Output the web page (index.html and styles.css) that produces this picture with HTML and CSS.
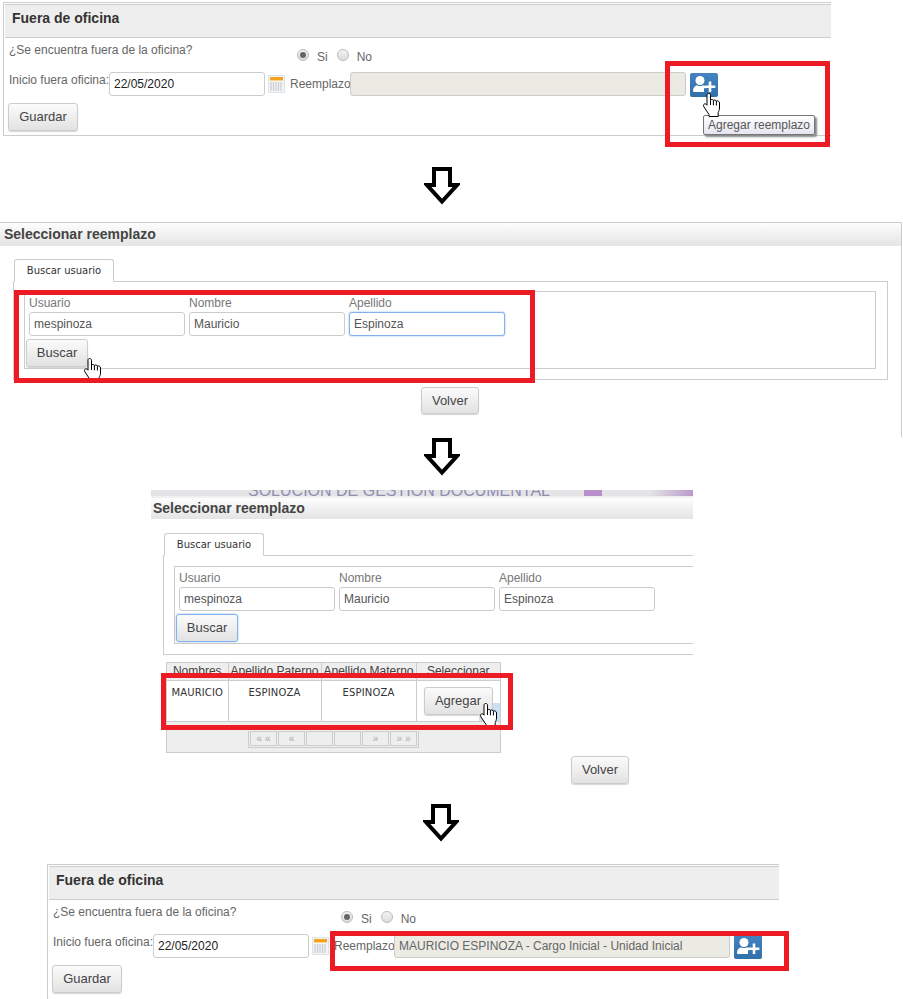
FILE: index.html
```html
<!DOCTYPE html>
<html lang="es">
<head>
<meta charset="utf-8">
<title>Fuera de oficina</title>
<link rel="stylesheet" href="styles.css">
</head>
<body>
<svg class="defs" width="0" height="0" aria-hidden="true">
  <symbol id="hand" viewBox="0 0 17 24">
    <path d="M4 2.200C4 1 4.800.5 5.700.5S7.500 1 7.500 2.200V7C8.200 6.200 9.800 6.300 10.400 7.300 11.200 6.700 12.800 6.900 13.400 8 14.400 7.600 16.500 8 16.500 10V15C16.500 17 15.800 18 15.200 19.500V23.500H6V21.500L1 14C.2 12.800.4 11.500 1.300 11 2.200 10.500 3.200 11 4 12.200Z" fill="#fff" stroke="#000" stroke-width="1" stroke-linejoin="round"/>
    <path d="M7.500 7v5M10.400 7.300v5M13.400 8v4.500" fill="none" stroke="#000" stroke-width="1"/>
  </symbol>
  <symbol id="user-plus" viewBox="0 0 28 24">
    <rect width="28" height="24" rx="2" fill="url(#blue)"/>
    <circle cx="10" cy="7.500" r="4.500" fill="#fff"/>
    <path d="M3 17.500C3 14.500 5 12.800 7 12.200 8.800 13.400 11.200 13.400 13 12.200 14 12.500 15 13 15.800 13.800V15.200H14V19H4.500C3.600 19 3 18.500 3 17.500Z" fill="#fff"/>
    <path d="M18.700 8.500h2.600v4h4v2.600h-4v4h-2.600v-4h-4v-2.600h4z" fill="#fff"/>
    <defs>
      <linearGradient id="blue" x1="0" y1="0" x2="0" y2="1">
        <stop offset="0" stop-color="#4384c1"/>
        <stop offset="1" stop-color="#3071a9"/>
      </linearGradient>
    </defs>
  </symbol>
  <symbol id="calendar" viewBox="0 0 17 18">
    <rect x=".5" y=".5" width="16" height="17" fill="#f4f4f4" stroke="#dde3e8"/>
    <rect x="2" y="2" width="13" height="3" fill="#f5a31f"/>
    <rect x="2" y="5" width="13" height="1" fill="#f9d48c"/>
    <path d="M3 7v9M5.500 7v9M8 7v9M10.500 7v9M13 7v9" stroke="#c6ccd2" stroke-width="1.200"/>
  </symbol>
  <symbol id="arrow" viewBox="0 0 36 38">
    <path d="M10 2h16v16h7L18 34.500 3 18h7z" fill="#fff" stroke="#000" stroke-width="4"/>
  </symbol>
</svg>

<main class="canvas">

  <section class="office office-first">
    <h2 class="office-title">Fuera de oficina</h2>
    <div class="office-body">
      <div class="office-row office-row-question">
        <span class="question">¿Se encuentra fuera de la oficina?</span>
        <div class="radios">
          <input class="radio" type="radio" name="out1" checked><span class="radio-label">Si</span>
          <input class="radio" type="radio" name="out1"><span class="radio-label">No</span>
        </div>
      </div>
      <div class="office-row office-row-fields">
        <span class="start-label">Inicio fuera oficina:</span>
        <input class="field field-date" type="text" value="22/05/2020">
        <svg class="calendar"><use href="#calendar"/></svg>
        <span class="replace-label">Reemplazo</span>
        <input class="field field-replace" type="text" value="" disabled>
        <svg class="user-plus"><use href="#user-plus"/></svg>
      </div>
      <button class="btn btn-save" type="button">Guardar</button>
    </div>
  </section>

  <svg class="hand hand-add"><use href="#hand"/></svg>
  <div class="tooltip">Agregar reemplazo</div>
  <div class="mark mark-add"></div>
  <svg class="arrow arrow-1"><use href="#arrow"/></svg>

  <section class="picker picker-second">
    <h2 class="picker-title">Seleccionar reemplazo</h2>
    <div class="tab">Buscar usuario</div>
    <div class="tab-panel">
      <div class="search-box">
        <div class="search-fields">
          <label class="search-field"><span class="search-label">Usuario</span><input class="field" type="text" value="mespinoza"></label>
          <label class="search-field"><span class="search-label">Nombre</span><input class="field" type="text" value="Mauricio"></label>
          <label class="search-field"><span class="search-label">Apellido</span><input class="field field-focus" type="text" value="Espinoza"></label>
        </div>
        <button class="btn btn-search" type="button">Buscar</button>
      </div>
    </div>
    <div class="back-row"><button class="btn btn-back" type="button">Volver</button></div>
  </section>

  <svg class="hand hand-search"><use href="#hand"/></svg>
  <div class="mark mark-search"></div>
  <svg class="arrow arrow-2"><use href="#arrow"/></svg>

  <section class="picker picker-third">
    <div class="logo-strip"><span class="logo-text">SOLUCION DE GESTION DOCUMENTAL</span><i class="logo-block"></i><i class="logo-fade"></i></div>
    <h2 class="picker-title">Seleccionar reemplazo</h2>
    <div class="tab">Buscar usuario</div>
    <div class="tab-panel">
      <div class="search-box">
        <div class="search-fields">
          <label class="search-field"><span class="search-label">Usuario</span><input class="field" type="text" value="mespinoza"></label>
          <label class="search-field"><span class="search-label">Nombre</span><input class="field" type="text" value="Mauricio"></label>
          <label class="search-field"><span class="search-label">Apellido</span><input class="field" type="text" value="Espinoza"></label>
        </div>
        <button class="btn btn-search btn-focus" type="button">Buscar</button>
      </div>
    </div>
    <div class="results">
      <table class="results-table">
        <thead>
          <tr><th class="col-1">Nombres</th><th class="col-2">Apellido Paterno</th><th class="col-3">Apellido Materno</th><th class="col-4">Seleccionar</th></tr>
        </thead>
        <tbody>
          <tr>
            <td>MAURICIO</td><td>ESPINOZA</td><td>ESPINOZA</td>
            <td class="cell-action"><button class="btn btn-add" type="button">Agregar</button><i class="cell-highlight"></i></td>
          </tr>
        </tbody>
      </table>
      <div class="pager">
        <div class="pager-group">
          <span class="page">« «</span><span class="page">«</span><span class="page"></span><span class="page"></span><span class="page">»</span><span class="page">» »</span>
        </div>
      </div>
    </div>
    <div class="back-row"><button class="btn btn-back" type="button">Volver</button></div>
  </section>

  <svg class="hand hand-agregar"><use href="#hand"/></svg>
  <div class="mark mark-row"></div>
  <svg class="arrow arrow-3"><use href="#arrow"/></svg>

  <section class="office office-last">
    <h2 class="office-title">Fuera de oficina</h2>
    <div class="office-body">
      <div class="office-row office-row-question">
        <span class="question">¿Se encuentra fuera de la oficina?</span>
        <div class="radios">
          <input class="radio" type="radio" name="out2" checked><span class="radio-label">Si</span>
          <input class="radio" type="radio" name="out2"><span class="radio-label">No</span>
        </div>
      </div>
      <div class="office-row office-row-fields">
        <span class="start-label">Inicio fuera oficina:</span>
        <input class="field field-date" type="text" value="22/05/2020">
        <svg class="calendar"><use href="#calendar"/></svg>
        <span class="replace-label">Reemplazo</span>
        <input class="field field-replace" type="text" value="MAURICIO ESPINOZA - Cargo Inicial - Unidad Inicial" disabled>
        <svg class="user-plus"><use href="#user-plus"/></svg>
      </div>
      <button class="btn btn-save" type="button">Guardar</button>
    </div>
  </section>

  <div class="mark mark-final"></div>
</main>
</body>
</html>
```
FILE: styles.css
```css
* { box-sizing: border-box; }
html, body { margin: 0; padding: 0; background: #fff; }
body { font-family: "Liberation Sans", Arial, sans-serif; font-size: 12px; color: #555; }
.defs { position: absolute; }
.canvas { position: relative; width: 903px; height: 999px; overflow: hidden; background: #fff; }

/* Office panel */
.office { position: absolute; display: flex; flex-direction: column; border-top: 1px solid #ccc; border-left: 1px solid #ccc; padding: 1px 0 0 1px; }
.office-first { left: 3px; top: 2px; width: 828px; height: 134px; border-bottom: 1px solid #ccc; }
.office-last { left: 47px; top: 864px; width: 732px; height: 135px; }
.office-title { margin: 0; height: 34px; padding: 0 0 0 7px; background: #eee; border-top: 1px solid #ccc; border-bottom: 1px solid #ccc; font-size: 14px; line-height: 27px; font-weight: bold; color: #333; }
.office-body { display: flex; flex-direction: column; padding-left: 4px; }
.office-row { display: flex; }
.office-row-question { height: 34px; }
.question { flex: none; width: 288px; padding-top: 5px; line-height: 14px; color: #666; }
.radios { display: flex; align-items: center; height: 12px; margin-top: 11px; }
.radio { appearance: none; flex: none; margin: 0; width: 12px; height: 12px; border-radius: 50%; border: 1px solid #bbb; background: linear-gradient(#f2f2f2, #dcdcdc); display: flex; align-items: center; justify-content: center; }
.radio:checked::before { content: ""; width: 6px; height: 6px; border-radius: 50%; background: #666; }
.radio-label { margin: 3px 9px 0 8px; color: #666; line-height: 14px; }
.office-row-fields { height: 31px; align-items: flex-start; }
.start-label { flex: none; width: 100px; padding-top: 1px; line-height: 14px; color: #666; white-space: nowrap; }
.field { display: block; flex: none; width: 156px; height: 24px; padding: 0 4px; border: 1px solid #ccc; border-radius: 3px; background: #fff; color: #555; font-family: "Liberation Sans", Arial, sans-serif; font-size: 12px; outline: none; }
.field-date { color: #222; }
.field-replace { width: 336px; background: #ebebe4; color: #666; opacity: 1; }
.field-focus { border-color: #82b1ee; box-shadow: 0 0 2px #82b1ee; }
.calendar { flex: none; width: 17px; height: 18px; margin: 3px 0 0 3px; }
.replace-label { flex: none; width: 60px; margin-left: 5px; padding-top: 5px; line-height: 14px; color: #666; }
.user-plus { flex: none; width: 28px; height: 24px; margin: 1px 0 0 4px; }

.btn { display: block; margin: 0; padding: 0 0 1px; border: 1px solid #ccc; border-radius: 3px; background: linear-gradient(#fbfbfb, #e2e2e2); box-shadow: 0 1px 1px #d5d5d5; color: #444; font-family: "Liberation Sans", Arial, sans-serif; font-size: 13px; }
.btn-save { width: 70px; height: 28px; margin-left: -1px; }

/* Picker panel */
.picker { position: absolute; display: flex; flex-direction: column; }
.picker-second { left: 0; top: 222px; width: 902px; height: 215px; border-top: 1px solid #ccc; border-right: 1px solid #ccc; }
.picker-third { left: 151px; top: 490px; width: 542px; height: 300px; overflow: hidden; }
.logo-strip { position: relative; flex: none; height: 8px; background: #e4e4e6; border-bottom: 2px solid #f0f0f0; overflow: hidden; }
.logo-text { position: absolute; left: 97px; top: -3px; font-size: 16px; line-height: 8px; color: #8d8fb0; white-space: nowrap; }
.logo-block { position: absolute; left: 433px; top: 0; width: 18px; height: 6px; background: #b98fcb; }
.logo-fade { position: absolute; left: 499px; top: 0; width: 43px; height: 6px; background: linear-gradient(100deg, #e4e4e6, #b79ac9); }
.picker-title { flex: none; margin: 0; height: 23px; padding-left: 4px; background: linear-gradient(#fdfdfd, #e4e4e4); font-size: 14px; line-height: 22px; font-weight: bold; color: #444; }
.picker-third .picker-title { height: 21px; padding-left: 2px; line-height: 20px; }
.tab { flex: none; width: 100px; height: 23px; margin: 13px 0 -1px 14px; position: relative; z-index: 1; background: #fff; border: 1px solid #ccc; border-bottom-color: #fff; border-radius: 3px 3px 0 0; font-family: "DejaVu Sans", Verdana, sans-serif; font-size: 10px; line-height: 21px; text-align: center; color: #333; }
.tab-panel { flex: none; margin-left: 13px; width: 875px; height: 99px; padding: 9px 11px 0 10px; border: 1px solid #ccc; }
.search-box { height: 78px; padding: 4px 0 0 1px; border: 1px solid #ccc; }
.search-fields { display: flex; gap: 4px; padding-left: 3px; }
.search-field { display: flex; flex-direction: column; }
.search-label { height: 16px; line-height: 14px; color: #777; }
.btn-search { width: 62px; height: 28px; margin-top: 3px; }
.btn-focus { border-color: #82b1ee; box-shadow: 0 0 2px #82b1ee; }
.back-row { display: flex; justify-content: flex-end; padding: 7px 422px 0 0; }
.btn-back { width: 58px; height: 27px; }

.picker-third .tab { margin-left: 13px; margin-top: 14px; }
.picker-third .tab-panel { margin-left: 12px; width: 545px; height: 100px; padding: 10px 0 0 10px; }
.picker-third .back-row { padding: 3px 64px 0 0; }
.picker-third .btn-back { height: 28px; }

/* Results */
.results { flex: none; width: 335px; margin: 7px 0 0 15px; border: 1px solid #ccc; background: #eee; }
.results-table { width: 333px; border-collapse: collapse; table-layout: fixed; background: #fff; }
.results-table th { height: 17px; padding: 0; background: #eee; border: 1px solid #ccc; border-top: 0; font-size: 12px; font-weight: normal; line-height: 14px; color: #444; white-space: nowrap; text-align: center; }
.results-table td { position: relative; height: 41px; padding: 6px 0 0; vertical-align: top; border: 1px solid #ccc; font-family: "DejaVu Sans", Verdana, sans-serif; font-size: 10px; letter-spacing: .15px; line-height: 12px; color: #333; text-align: center; }
.results-table th:first-child, .results-table td:first-child { border-left: 0; }
.results-table th:last-child, .results-table td:last-child { border-right: 0; }
.col-1 { width: 61px; }
.col-2 { width: 93px; }
.col-3 { width: 95px; }
.col-4 { width: 84px; }
.cell-action .btn { position: relative; z-index: 1; width: 69px; height: 28px; margin: 0 0 0 7px; letter-spacing: 0; font-family: "Liberation Sans", Arial, sans-serif; }
.cell-highlight { position: absolute; right: 0; bottom: 0; width: 21px; height: 18px; background: #c7e0f7; }
.pager { display: flex; justify-content: center; height: 30px; padding-top: 9px; }
.pager-group { display: flex; gap: 1px; width: 171px; height: 17px; border: 1px solid #ccc; border-top: 0; padding: 0 1px; }
.page { flex: 1; height: 15px; border: 1px solid #ccc; font-family: "Liberation Sans", Arial, sans-serif; font-size: 10px; line-height: 13px; text-align: center; color: #aaa; }

/* Overlays */
.mark { position: absolute; z-index: 3; border: 5px solid #ed1c24; }
.mark-add { left: 665px; top: 61px; width: 165px; height: 86px; }
.mark-search { left: 14px; top: 290px; width: 521px; height: 93px; }
.mark-row { left: 161px; top: 673px; width: 352px; height: 57px; }
.mark-final { left: 330px; top: 931px; width: 459px; height: 40px; }
.hand { position: absolute; z-index: 2; width: 17px; height: 24px; }
.hand-add { left: 703px; top: 93px; }
.hand-search { left: 84px; top: 358px; }
.hand-agregar { left: 480px; top: 703px; }
.arrow { position: absolute; width: 36px; height: 38px; }
.arrow-1 { left: 424px; top: 167px; }
.arrow-2 { left: 424px; top: 438px; }
.arrow-3 { left: 423px; top: 804px; }
.tooltip { position: absolute; z-index: 1; left: 703px; top: 115px; width: 112px; height: 20px; border: 1px solid #767676; border-radius: 2px; background: linear-gradient(#fff, #e4e5f0); box-shadow: 2px 2px 2px #888; font-size: 12px; line-height: 18px; text-align: center; color: #575757; }
```
